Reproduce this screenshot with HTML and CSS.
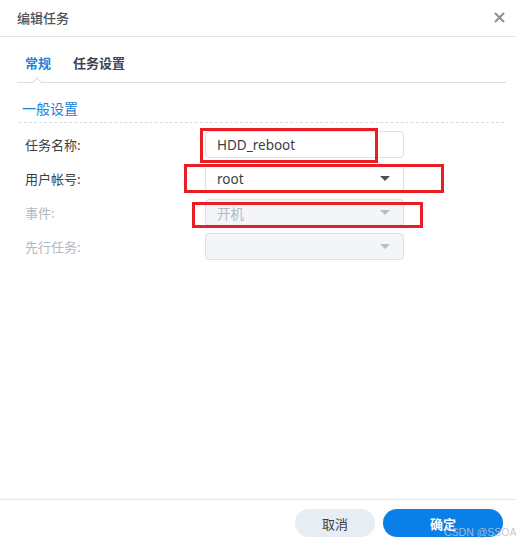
FILE: index.html
```html
<!DOCTYPE html>
<html lang="zh-CN">
<head>
<meta charset="utf-8">
<title>编辑任务</title>
<link rel="stylesheet" href="styles.css">
</head>
<body>
<div class="dialog">
  <div class="header">
    <span class="title">编辑任务</span>
    <span class="close">
      <svg width="11" height="11" viewBox="0 0 11 11"><path d="M1 1L10 10M10 1L1 10" stroke="#8e949b" stroke-width="2.2" fill="none"/></svg>
    </span>
  </div>
  <div class="tabs">
    <span class="tab active">常规</span>
    <span class="tab">任务设置</span>
    <span class="caret"></span>
  </div>
  <div class="content">
    <div class="section-title">一般设置</div>
    <div class="form">
      <div class="row">
        <label class="label">任务名称:</label>
        <div class="field"><span class="value">HDD_reboot</span></div>
      </div>
      <div class="row">
        <label class="label">用户帐号:</label>
        <div class="field select"><span class="value">root</span><span class="arrow"></span></div>
      </div>
      <div class="row disabled">
        <label class="label">事件:</label>
        <div class="field select"><span class="value">开机</span><span class="arrow"></span></div>
      </div>
      <div class="row disabled">
        <label class="label">先行任务:</label>
        <div class="field select"><span class="value"></span><span class="arrow"></span></div>
      </div>
    </div>
  </div>
  <div class="footer">
    <button class="btn cancel">取消</button>
    <button class="btn ok">确定</button>
  </div>
  <div class="mark mark1"></div>
  <div class="mark mark2"></div>
  <div class="mark mark3"></div>
  <div class="watermark">CSDN @SSOA6</div>
</div>
</body>
</html>
```
FILE: styles.css
```css
* { box-sizing: border-box; }
html, body { margin: 0; padding: 0; background: #fff; }
body {
  font-family: "Noto Sans CJK SC", "Noto Sans", sans-serif;
  color: #333;
}
.dialog {
  position: relative;
  width: 516px;
  height: 546px;
  display: flex;
  flex-direction: column;
  overflow: hidden;
}
.header {
  height: 37px;
  border-bottom: 1px solid #dfe4ea;
  display: flex;
  align-items: center;
  justify-content: space-between;
  padding: 0 11px 2px 17px;
}
.title {
  font-size: 13px;
  color: #50555c;
  font-weight: 500;
}
.close { display: flex; width: 11px; height: 11px; }
.tabs {
  position: relative;
  margin: 0 10px 0 17px;
  padding: 17px 0 10px 8px;
  border-bottom: 1px solid #d6e0ea;
  display: flex;
  gap: 22px;
  line-height: 18px;
}
.tab {
  font-size: 13px;
  font-weight: 700;
  color: #3b4450;
}
.tab.active { color: #1a83e0; }
.caret {
  position: absolute;
  left: 16px;
  bottom: -5px;
  width: 8px;
  height: 8px;
  background: #fff;
  border-top: 1px solid #d6e0ea;
  border-left: 1px solid #d6e0ea;
  transform: rotate(45deg);
}
.content { flex: 1; }
.section-title {
  margin: 0 12px 0 19px;
  padding: 15px 0 4px 3px;
  line-height: 20px;
  font-size: 14px;
  color: #1b7fd9;
  border-bottom: 1px dashed #d3dde8;
}
.form {
  padding: 8px 0 0 25px;
  display: flex;
  flex-direction: column;
  gap: 7px;
}
.row {
  display: flex;
  align-items: center;
  height: 27px;
}
.label {
  width: 180px;
  font-size: 13px;
  color: #3a3f45;
}
.field {
  width: 199px;
  height: 27px;
  border: 1px solid #d9e1ea;
  border-radius: 4px;
  display: flex;
  align-items: center;
  justify-content: space-between;
  padding: 0 10px 0 11px;
  font-size: 13.5px;
  font-family: "Noto Sans", "Noto Sans CJK SC", sans-serif;
  color: #3a3f45;
}
.arrow {
  width: 0;
  height: 0;
  border-left: 5px solid transparent;
  border-right: 5px solid transparent;
  border-top: 5px solid #4b5058;
  margin-right: 3px;
}
.row.disabled .label { color: #b3b8bf; }
.row.disabled .field { background: #f3f5f9; color: #b4b9c0; }
.row.disabled .arrow { border-top-color: #b8bdc4; }
.footer {
  height: 47px;
  border-top: 1px solid #e6e6e6;
  display: flex;
  justify-content: flex-end;
  align-items: flex-start;
  gap: 8px;
  padding: 9px 13px 0 0;
}
.btn {
  height: 28px;
  border: none;
  border-radius: 14px;
  font-family: "Noto Sans CJK SC", sans-serif;
  font-size: 13px;
  padding: 0;
}
.cancel { width: 80px; background: #e8edf3; color: #3a3f45; }
.ok { width: 120px; background: #0a7fe8; color: #fff; font-weight: 700; }
.mark {
  position: absolute;
  border: 3px solid #ea1c24;
}
.mark1 { left: 200px; top: 128px; width: 178px; height: 35px; }
.mark2 { left: 184px; top: 164px; width: 260px; height: 29px; }
.mark3 { left: 192px; top: 202px; width: 231px; height: 26px; }
.watermark {
  position: absolute;
  left: 444px;
  top: 526px;
  font-family: "Liberation Sans", sans-serif;
  font-size: 10.5px;
  color: rgba(190, 195, 200, 0.9);
  white-space: nowrap;
}
```
